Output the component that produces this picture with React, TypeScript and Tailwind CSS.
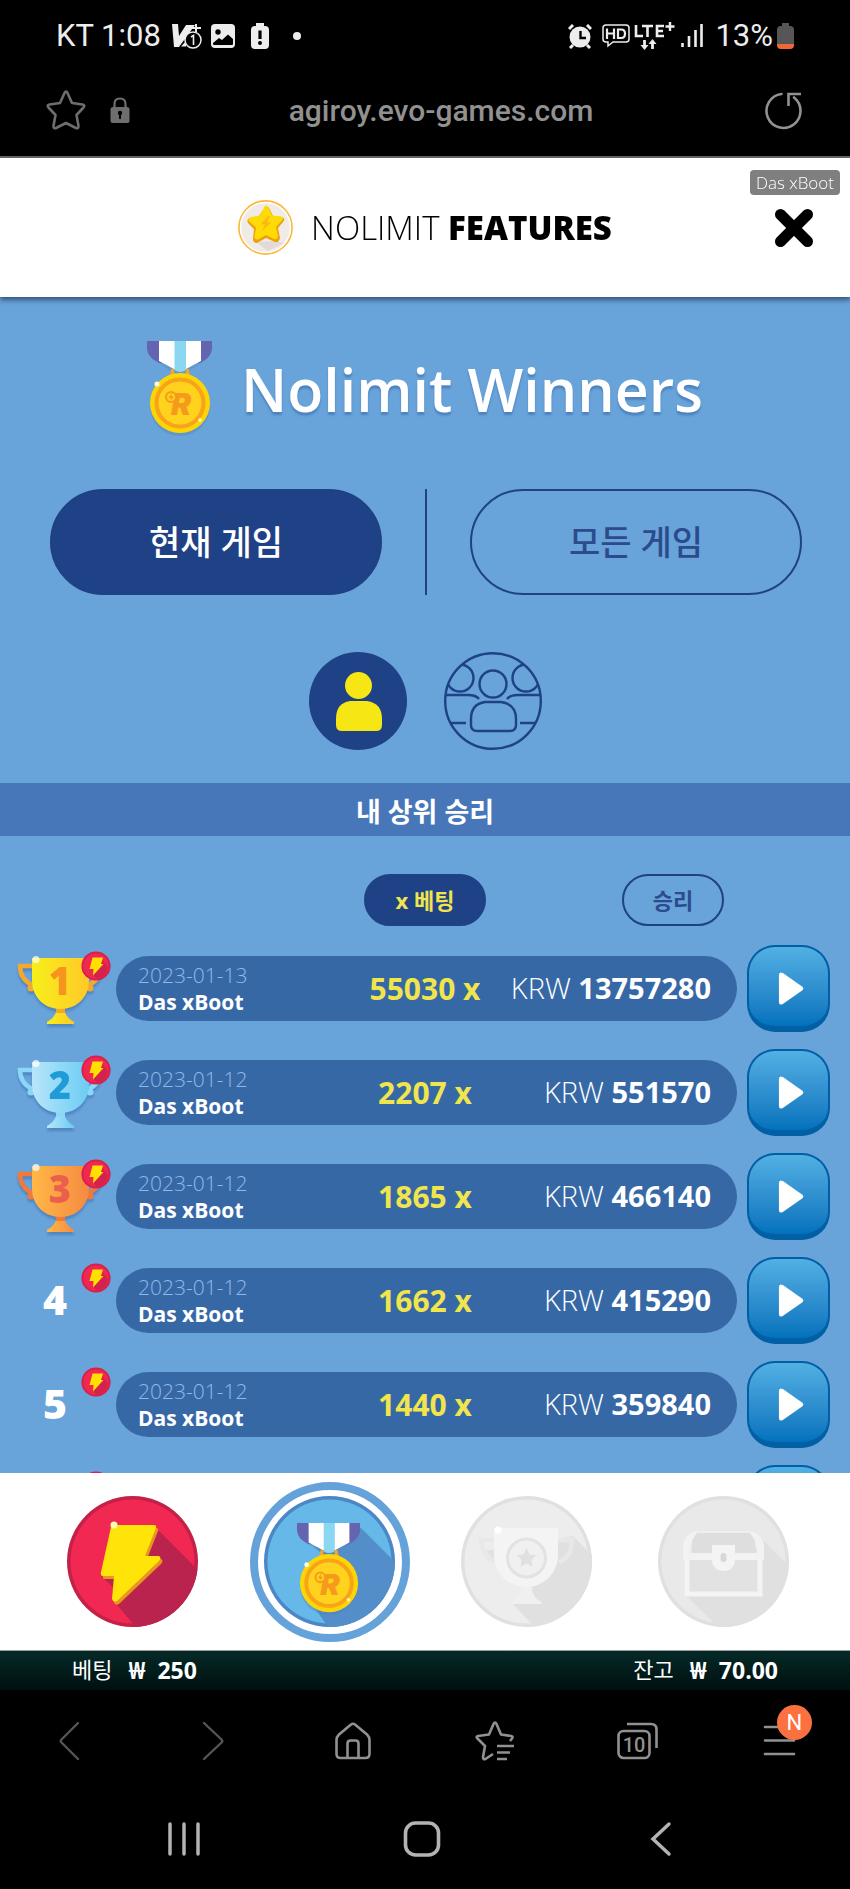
import { useState, type ReactNode } from 'react'
import clsx from 'clsx'

interface Win {
  rank: number
  date: string
  game: string
  multiplier: string
  amount: string
}

const wins: Win[] = [
  { rank: 1, date: '2023-01-13', game: 'Das xBoot', multiplier: '55030', amount: '13757280' },
  { rank: 2, date: '2023-01-12', game: 'Das xBoot', multiplier: '2207', amount: '551570' },
  { rank: 3, date: '2023-01-12', game: 'Das xBoot', multiplier: '1865', amount: '466140' },
  { rank: 4, date: '2023-01-12', game: 'Das xBoot', multiplier: '1662', amount: '415290' },
  { rank: 5, date: '2023-01-12', game: 'Das xBoot', multiplier: '1440', amount: '359840' },
]

const BOLT = 'M47 29 H87 Q90 29 89 32 L78 60 H92 Q95 62 92 65 L50 105 Q46 107 45 103 L47 80 H36 Q33 80 34 76 L44 31 Q45 29 47 29 Z'

function StatusBar() {
  return (
    <div className="flex h-[72px] shrink-0 items-center px-14 font-[Roboto,sans-serif] text-[31px] text-[#ededed]">
      <span>KT 1:08</span>
      <svg className="ml-2.5" width="32" height="28" viewBox="0 0 32 28" fill="none">
        <path d="M1 2 H7 L8 14 L15 3 H24 L8 25 H3 Z" fill="#ededed" />
        <path d="M10 24.500 L15 19 V24.500 Z" fill="#ededed" />
        <path d="M25 2 V10 M21 6 H30" stroke="#ededed" strokeWidth="2" />
        <circle cx="22" cy="18" r="8" fill="#000" stroke="#ededed" strokeWidth="1.5" />
        <path d="M20 15 L22.500 13.500 V23" stroke="#ededed" strokeWidth="1.6" />
      </svg>
      <svg className="ml-2" width="24" height="24" viewBox="0 0 24 24">
        <rect width="24" height="24" rx="4" fill="#ededed" />
        <circle cx="7" cy="8" r="2.700" fill="#000" />
        <path d="M2 19 L8 14 L11 16 L17 10.500 L22 15 V20 Q22 21 21 21 H3 Q2 21 2 20 Z" fill="#000" />
      </svg>
      <svg className="ml-4" width="18" height="26" viewBox="0 0 18 26">
        <path d="M5 0 H13 V3 H14 Q18 3 18 7 V22 Q18 26 14 26 H4 Q0 26 0 22 V7 Q0 3 4 3 H5 Z" fill="#ededed" />
        <path d="M9 7.500 V16" stroke="#000" strokeWidth="3.200" />
        <circle cx="9" cy="20" r="2" fill="#000" />
      </svg>
      <span className="ml-6 size-2 rounded-full bg-[#ededed]" />

      <div className="ml-auto flex items-center">
        <svg width="24" height="25" viewBox="0 0 24 25">
          <circle cx="12" cy="13" r="10.500" fill="#ededed" />
          <path d="M1 5 L5 1 M19 1 L23 5 M5 21 L2 24 M19 21 L22 24" stroke="#ededed" strokeWidth="3" />
          <path d="M12.500 7 V14 H18" fill="none" stroke="#000" strokeWidth="2.400" />
        </svg>
        <svg className="ml-2.5" width="28" height="24" viewBox="0 0 28 24" fill="none">
          <path d="M4 1 H24 Q27 1 27 4 V15 Q27 18 24 18 H11 L6 22 V18 H4 Q1 18 1 15 V4 Q1 1 4 1 Z" stroke="#ededed" strokeWidth="1.500" />
          <path d="M5 4.500 V15 M12 4.500 V15 M5 9.500 H12 M16 5.500 V14 H19 Q23 14 23 9.700 Q23 5.500 19 5.500 Z" stroke="#ededed" strokeWidth="2.200" />
        </svg>
        <svg className="ml-1" width="41" height="30" viewBox="0 0 41 30" fill="none" stroke="#ededed">
          <path d="M2 4 V15 H9 M8 5 H19 M13.500 5 V16 M30 5 H23 V15 H30 M23 10 H29" strokeWidth="2.600" />
          <path d="M36 1 V10 M31.500 5.500 H40.500" strokeWidth="2.400" />
          <path d="M10.500 19 V26 M18.500 28 V21" strokeWidth="2.800" />
          <path d="M6.500 24 H14.500 L10.500 29 Z M14.500 23 H22.500 L18.500 18 Z" fill="#ededed" stroke="none" />
        </svg>
        <svg className="ml-1.5" width="22" height="24" viewBox="0 0 22 24" stroke="#ededed" strokeWidth="2.600">
          <path d="M1.500 19 V23 M8 12 V23 M14.500 6 V23 M20.500 0 V23" />
        </svg>
        <span className="ml-3">13%</span>
        <svg className="ml-1" width="17" height="26" viewBox="0 0 17 26">
          <path d="M5 0 H12 V3 H13 Q17 3 17 7 V21 H0 V7 Q0 3 4 3 H5 Z" fill="#565656" />
          <path d="M0 21 H17 V22 Q17 26 13 26 H4 Q0 26 0 22 Z" fill="#f0673a" />
        </svg>
      </div>
    </div>
  )
}

function AddressBar() {
  return (
    <div className="grid h-[86px] shrink-0 grid-cols-[1fr_auto_1fr] items-center border-b-2 border-[#666] px-[46px] pb-2 font-[Roboto,sans-serif]">
      <div className="flex items-center gap-6">
        <button aria-label="Bookmark">
          <svg width="40" height="40" viewBox="0 0 40 40" fill="none" stroke="#6e6e6e" strokeWidth="2.600" strokeLinejoin="round">
            <path d="M18.500 3 Q20 0 21.500 3 L26 13 L36.500 14.500 Q39.500 15 37.500 17.500 L30.500 25 L32.500 36 Q32.500 39 30 38 L20 33 L10 38 Q7.500 39 7.500 36 L9.500 25 L2.500 17.500 Q0.500 15 3.500 14.500 L14 13 Z" />
          </svg>
        </button>
        <svg width="20" height="26" viewBox="0 0 20 26">
          <path d="M4.500 11 V7 Q4.500 1.500 10 1.500 Q15.500 1.500 15.500 7 V11" fill="none" stroke="#6e6e6e" strokeWidth="2.200" />
          <rect x="0.500" y="10" width="19" height="16" rx="2.500" fill="#6e6e6e" />
          <circle cx="10" cy="16" r="2.200" fill="#000" />
          <path d="M10 16 V22" stroke="#000" strokeWidth="2" />
        </svg>
      </div>
      <span className="pl-8 text-[30px] font-medium text-[#919191]">agiroy.evo-games.com</span>
      <button aria-label="Reload" className="justify-self-end">
        <svg width="40" height="40" viewBox="0 0 40 40" fill="none" stroke="#919191" strokeWidth="2.600">
          <path d="M17.500 4 A17 17 0 1 0 30 7.500" strokeLinecap="round" />
          <path d="M37 4 H24.500 V16" />
        </svg>
      </button>
    </div>
  )
}

function StarLogo() {
  return (
    <svg width="55" height="57" viewBox="0 0 55 57">
      <circle cx="27.500" cy="28.500" r="26.500" fill="#f1ebe8" stroke="#fbb936" strokeWidth="1.800" />
      <circle cx="27.500" cy="28.500" r="25" fill="none" stroke="#fff" strokeWidth="1.500" />
      <path d="M37 42 L46 44 L30 52 L18 43 Z" fill="#e2dad7" />
      <path d="M27 8 Q29 6 31 9 L35 17 L44 18 Q48 20 45 23 L40 29 L42 39 Q41 44 37 43 L28 39 L19 44 Q15 44 15 40 L16 30 L10 24 Q8 20 12 19 L21 17 Z" fill="#eba010" />
      <path d="M27 7 Q28.500 5.500 30 8 L34 16.500 L43 17.500 Q46.500 18.500 44 21.500 L38 28 L40 37 Q39.500 41 36 40 L28 36 L20 40.500 Q16 41 16.500 37.500 L18 28.500 L11 22.500 Q9.500 18.500 13 18 L22 16.500 Z" fill="#ffdb05" />
      <path d="M30 17 L23 25 L27 26 L23 33 L33 24 L29 23 L32 17 Z" fill="#fcb913" />
    </svg>
  )
}

function MedalArt() {
  return (
    <>
      <path d="M0 3 Q2 18 10 21 L27 32 H38 L56 21 Q64 17 65 3 Z" fill="#4f83bd" opacity="0.350" />
      <path d="M0 0 H65 V8 Q64 16 56 20 L53 22 H12 L9 20 Q1 16 0 8 Z" fill="#6564b0" />
      <path d="M12 0 H54 V20 L39 28 H27 L12 20 Z" fill="#fff" />
      <path d="M27.500 0 H39 V29 Q33 33 27.500 29 Z" fill="#8bd6f1" />
      <path d="M26 28 L24.500 36 M40 28 L41.500 36" stroke="#f5a52c" strokeWidth="3.500" />
      <circle cx="33" cy="65" r="30" fill="#4f83bd" opacity="0.400" />
      <circle cx="33" cy="62" r="30" fill="#fed504" />
      <circle cx="33" cy="62" r="23.500" fill="#ffd21d" stroke="#f8a31a" strokeWidth="4" />
      <text x="24" y="74" fill="#f59a1c" className="font-[Inter,sans-serif] text-[30px] font-black italic">R</text>
      <circle cx="24" cy="56" r="5" fill="#ffd21d" stroke="#f59a1c" strokeWidth="2" />
      <path d="M25 52 L21.500 57 H24 L23 60 L27 55.500 H24.500 Z" fill="#f59a1c" />
      <circle cx="10" cy="43" r="2.500" fill="#fffbe0" />
      <circle cx="53" cy="79" r="1.800" fill="#fff6c0" />
    </>
  )
}

function BoltBadge() {
  return (
    <svg className="absolute top-[6px] left-[81px]" width="30" height="30" viewBox="0 0 30 30">
      <circle cx="15" cy="15" r="14.600" fill="#d71f49" />
      <circle cx="15" cy="15" r="12.800" fill="#f02750" />
      <path d="M21 9 L27 16 A12.500 12.500 0 0 1 16 27.500 L12 24 Z" fill="#d3224b" />
      <path d="M11.500 6.500 H22 L20 13 H22.500 L12 24.500 L12.500 18 H8.500 Z" fill="#ffe000" />
    </svg>
  )
}

const cups = [
  { from: '#f7ef1a', to: '#ffc928', handle: '#f5a92c', digit: '#f7941d' },
  { from: '#b8e6fa', to: '#6cccf3', handle: '#8cd7f6', digit: '#1f9cd8' },
  { from: '#ffb846', to: '#f58a42', handle: '#f2793c', digit: '#ec5f4b' },
]

function Cup({ rank }: { rank: number }) {
  const c = cups[rank - 1]
  return (
    <svg width="116" height="87" viewBox="0 0 116 87" className="drop-shadow-[0_3px_1px_rgba(40,80,150,0.35)]">
      <defs>
        <linearGradient id={`cup-${rank}`}>
          <stop offset="0" stopColor={c.from} />
          <stop offset="1" stopColor={c.to} />
        </linearGradient>
      </defs>
      <path d="M33 21 H20 Q20 34 32 40 M88 21 H101 Q101 34 89 40" fill="none" stroke={c.handle} strokeWidth="4.500" />
      <circle cx="31" cy="43" r="3.500" fill={c.handle} />
      <circle cx="90" cy="43" r="3.500" fill={c.handle} />
      <path d="M56 60 H65 V67 Q67 73 74 77 V79 H47 V77 Q54 73 56 67 Z" fill={`url(#cup-${rank})`} />
      <path d="M56 62 H65 V68 H56 Z" fill={c.handle} />
      <path d="M32 13 H89 V35 C89 53 76 64 60.500 64 C45 64 32 53 32 35 Z" fill={`url(#cup-${rank})`} />
      <circle cx="36" cy="14.500" r="3.500" fill="#fff" opacity="0.750" />
      <text x="60" y="50" textAnchor="middle" fill={c.digit} className="text-[38px] font-extrabold">{rank}</text>
    </svg>
  )
}

function PlayButton({ label }: { label: string }) {
  return (
    <button
      aria-label={label}
      className="flex h-[87px] w-[83px] items-center justify-center rounded-[28px] border-2 border-b-[6px] border-[#005fa5] bg-gradient-to-b from-[#52b0e4] to-[#0072bc]"
    >
      <svg className="mt-1 ml-1" width="26" height="33" viewBox="0 0 27 34">
        <path d="M1 3 Q1 -1 5 1 L25 15 Q27.500 17 25 19 L5 33 Q1 35 1 31 Z" fill="#fff" />
      </svg>
    </button>
  )
}

function WinRow({ win }: { win: Win }) {
  return (
    <tr className="flex h-[104px] items-center">
      <td className="relative flex h-[87px] w-[116px] shrink-0 items-center">
        {win.rank <= 3 ? (
          <Cup rank={win.rank} />
        ) : (
          <span className="w-[110px] text-center text-[41px] font-extrabold">{win.rank}</span>
        )}
        <BoltBadge />
      </td>
      <td className="flex h-[65px] flex-1 flex-col justify-center rounded-l-full bg-[#3768a6] pt-0.5 pl-[22px] text-[21px] leading-[27px]">
        <span className="font-light text-[#8fb9e6]">{win.date}</span>
        <span className="font-bold">{win.game}</span>
      </td>
      <td className="flex h-[65px] w-[150px] items-center justify-center bg-[#3768a6] text-[30px] font-bold text-[#f0e54d]">
        {win.multiplier} x
      </td>
      <td className="flex h-[65px] w-[237px] items-center justify-end rounded-r-full bg-[#3768a6] pr-[26px] text-[29px]">
        <span className="font-light whitespace-pre">KRW </span>
        <span className="font-bold">{win.amount}</span>
      </td>
      <td className="w-[113px] shrink-0 pl-[10px]">
        <PlayButton label={`Replay ${win.rank}`} />
      </td>
    </tr>
  )
}

// Next row, still loading: only its badge and button are there
function PendingRow() {
  return (
    <tr className="flex h-[104px] items-center">
      <td className="relative h-[87px] w-[116px] shrink-0">
        <BoltBadge />
      </td>
      <td className="h-[65px] flex-1 rounded-full bg-[#3768a6]" />
      <td className="w-[113px] shrink-0 pl-[10px]">
        <PlayButton label="Replay" />
      </td>
    </tr>
  )
}

function NavDisc({ id, base, rim, shade, shadow, children }: { id: string; base: string; rim: string; shade: string; shadow: string; children: ReactNode }) {
  return (
    <svg width="131" height="131" viewBox="0 0 131 131">
      <clipPath id={id}>
        <circle cx="65.500" cy="65.500" r="65.500" />
      </clipPath>
      <circle cx="65.500" cy="65.500" r="65.500" fill={rim} />
      <circle cx="65.500" cy="65.500" r="62" fill={base} />
      <path d={shadow} fill={shade} clipPath={`url(#${id})`} />
      {children}
    </svg>
  )
}

function FeatureNav() {
  return (
    <nav className="flex h-[177px] shrink-0 items-center justify-around bg-white pr-7 pl-[34px]">
      <button aria-label="Bolt" className="flex w-[160px] justify-center">
        <NavDisc id="disc-bolt" base="#f02852" rim="#c32148" shade="#ba234d" shadow="M90 33 L140 83 V140 H76 L47 105 Z">
          <path d="M34 80 L47 92 L50 80 Z" fill="#ba234d" />
          <path d={BOLT} fill="#e8971e" transform="translate(2 3)" />
          <path d={BOLT} fill="#ffe40a" />
          <circle cx="47" cy="29" r="3.500" fill="#fffbb0" />
        </NavDisc>
      </button>
      <button aria-label="Winners" aria-current="page" className="flex size-[160px] items-center justify-center rounded-full border-8 border-[#66a2da]">
        <NavDisc id="disc-medal" base="#66b8e9" rim="#4c87c5" shade="#538ecb" shadow="M97 32 L140 75 V140 H73 L62 128 L48 108 L60 60 L48 48 Z">
          <g transform="translate(33 27) scale(0.970)">
            <MedalArt />
          </g>
        </NavDisc>
      </button>
      <button aria-label="Trophies" className="flex w-[160px] justify-center">
        <NavDisc id="disc-cup" base="#ededed" rim="#e0e0e0" shade="#e0e0e0" shadow="M112 40 L140 68 V140 H82 L52 108 L70 100 L25 55 Z">
          <path d="M34 44 H20 Q22 62 35 66 M97 44 H111 Q110 62 98 66" fill="none" stroke="#e8e8e8" strokeWidth="4.500" />
          <path d="M33 32 H97 V58 C97 78 82 91 65 91 C48 91 33 78 33 58 Z" fill="#f4f4f4" />
          <path d="M60 91 H71 Q71 102 81 106 V108 H50 V106 Q60 102 60 91 Z" fill="#f0f0f0" />
          <circle cx="65.500" cy="62" r="19" fill="#f0f0f0" stroke="#e2e2e2" strokeWidth="3" />
          <path d="M65.500 52 L68.500 58.500 L75.500 59.300 L70.300 64 L71.700 71 L65.500 67.500 L59.300 71 L60.700 64 L55.500 59.300 L62.500 58.500 Z" fill="#e0e0e0" />
          <circle cx="37" cy="34" r="3.500" fill="#fff" />
        </NavDisc>
      </button>
      <button aria-label="Chest" className="flex w-[160px] justify-center">
        <NavDisc id="disc-chest" base="#e9e9e9" rim="#e0e0e0" shade="#e0e0e0" shadow="M106 45 L140 79 V140 H70 L27 99 Z">
          <rect x="29" y="60" width="73" height="38" fill="#e2e2e2" stroke="#f4f4f4" strokeWidth="5" />
          <path d="M34 36 H97 V58 H34 Z" fill="#dedede" />
          <path d="M25 64 V50 Q27 35 42 35 Q33 40 32 57 H99 Q98 40 89 35 Q104 36 106 50 V64 Z" fill="#f2f2f2" />
          <path d="M38 36 H93" stroke="#efefef" strokeWidth="2" />
          <path d="M54 49 H77 V64 Q76 75 65.500 75 Q55 75 54 64 Z" fill="#f4f4f4" />
          <rect x="62.500" y="57" width="6" height="9" rx="3" fill="#d8d8d8" />
        </NavDisc>
      </button>
    </nav>
  )
}

function Balance({ label, value }: { label: string; value: string }) {
  return (
    <p className="flex gap-4">
      <span className="text-[22px]">{label}</span>
      <span className="flex gap-3 text-[23px] font-bold">
        <span className="font-['Noto_Sans','Open_Sans',sans-serif]">₩</span>
        <span>{value}</span>
      </span>
    </p>
  )
}

function BalanceBar() {
  return (
    <div className="flex h-10 shrink-0 items-center justify-between border-t border-[#999] bg-gradient-to-b from-[#062a28] to-[#001010] px-[72px]">
      <Balance label="베팅" value="250" />
      <Balance label="잔고" value="70.00" />
    </div>
  )
}

function BrowserToolbar() {
  return (
    <div className="flex h-[105px] shrink-0 items-center justify-between px-[50px] pb-1 font-[Roboto,sans-serif]">
      <button aria-label="Back">
        <svg width="40" height="40" viewBox="0 0 40 40" fill="none" stroke="#555" strokeWidth="2.400" strokeLinecap="round">
          <path d="M28 2 L11.500 18.500 Q10 20 11.500 21.500 L28 38" />
        </svg>
      </button>
      <button aria-label="Forward">
        <svg width="40" height="40" viewBox="0 0 40 40" fill="none" stroke="#555" strokeWidth="2.400" strokeLinecap="round">
          <path d="M12 2 L29.500 18.500 Q31 20 29.500 21.500 L12 38" />
        </svg>
      </button>
      <button aria-label="Home">
        <svg width="40" height="40" viewBox="0 0 40 40" fill="none" stroke="#919191" strokeWidth="2.600" strokeLinejoin="round">
          <path d="M18 3.500 Q20 2 22 3.500 L34 13.500 Q36.500 16 36.500 19 V33 Q36.500 37 32.500 37 H7.500 Q3.500 37 3.500 33 V19 Q3.500 16 6 13.500 Z" />
          <path d="M14.500 37 V22.500 Q14.500 19.500 17.500 19.500 H22.500 Q25.500 19.500 25.500 22.500 V37" />
        </svg>
      </button>
      <button aria-label="Bookmarks">
        <svg width="40" height="40" viewBox="0 0 40 40" fill="none" stroke="#919191" strokeWidth="2.600" strokeLinejoin="round">
          <path d="M35 20 L37 17.500 Q38.500 15.500 36 15 L26 13.500 L21.500 3 Q20 0 18.500 3 L14 13.500 L3 15 Q0.500 15.500 2.500 17.500 L10 25 L8 36 Q8 39 10.500 38 L18 33" />
          <path d="M22 25 H39 M22 31.500 H35 M22 38 H32" />
        </svg>
      </button>
      <button aria-label="Tabs, 10 open">
        <svg width="42" height="40" viewBox="0 0 42 40" fill="none" stroke="#919191" strokeWidth="2.600">
          <rect x="2.500" y="10" width="31" height="27" rx="5" />
          <path d="M11 3 H35 Q40.500 3 40.500 8.500 V27" />
          <text x="18" y="31" textAnchor="middle" fill="#919191" stroke="none" className="text-[20px] font-medium">10</text>
        </svg>
      </button>
      <button aria-label="Menu" className="relative">
        <svg width="40" height="40" viewBox="0 0 40 40" stroke="#919191" strokeWidth="2.600" strokeLinecap="round">
          <path d="M5 6 H34 M5 19.500 H34 M5 33 H34" />
        </svg>
        <span className="absolute -top-4 -right-3 flex size-[35px] items-center justify-center rounded-full bg-[#fd7140] text-[22px] text-white">N</span>
      </button>
    </div>
  )
}

function SystemNav() {
  return (
    <div className="flex h-[94px] shrink-0 items-center justify-between pr-[171px] pb-1.5 pl-[164px]">
      <button aria-label="Recent apps">
        <svg width="40" height="40" viewBox="0 0 40 40" stroke="#b3b3b3" strokeWidth="3.500" strokeLinecap="round">
          <path d="M6 5 V35 M20 5 V35 M34 5 V35" />
        </svg>
      </button>
      <button aria-label="Home screen">
        <svg width="40" height="40" viewBox="0 0 40 40" fill="none" stroke="#b3b3b3" strokeWidth="3.600">
          <rect x="3.500" y="4" width="33" height="32" rx="10" />
        </svg>
      </button>
      <button aria-label="Go back">
        <svg width="40" height="40" viewBox="0 0 40 40" fill="none" stroke="#b3b3b3" strokeWidth="3.500" strokeLinecap="round">
          <path d="M30 5 L14 20 L30 35" />
        </svg>
      </button>
    </div>
  )
}

export default function App() {
  const [scope, setScope] = useState<'current' | 'all'>('current')
  const [sort, setSort] = useState<'bet' | 'win'>('bet')

  return (
    <div className="flex h-screen flex-col overflow-hidden bg-black font-['Open_Sans','Noto_Sans_CJK_KR',sans-serif] text-white">
      <StatusBar />
      <AddressBar />

      <header className="relative z-10 grid h-[139px] shrink-0 grid-cols-[1fr_auto_1fr] items-center bg-white text-black shadow-[0_3px_5px_rgba(30,50,80,0.7)]">
        <div className="col-start-2 flex items-center gap-[18px]">
          <StarLogo />
          <h1 className="text-[33px] font-light">
            NOLIMIT <strong className="font-extrabold">FEATURES</strong>
          </h1>
        </div>
        <button aria-label="Close" className="mr-9 justify-self-end">
          <svg width="40" height="40" viewBox="0 0 40 40" stroke="#000" strokeWidth="11" strokeLinecap="round">
            <path d="M6.500 6.500 L33.500 33.500 M33.500 6.500 L6.500 33.500" />
          </svg>
        </button>
        <span className="absolute top-3 right-[10px] rounded-[4px] bg-[#7f7f7f] px-1.5 text-[17px] leading-[25px] font-light text-white">
          Das xBoot
        </span>
      </header>

      <main className="min-h-0 flex-1 overflow-y-auto bg-[#68a3da] [scrollbar-width:none]">
        <div className="flex items-center justify-center gap-7 pt-11">
          <svg width="66" height="96" viewBox="0 0 66 96">
            <MedalArt />
          </svg>
          <h2 className="text-[59px] leading-[96px] font-semibold [text-shadow:0_3px_2px_rgba(60,110,170,0.6)]">Nolimit Winners</h2>
        </div>

        <div className="mt-[52px] flex gap-[43px] pr-12 pl-[50px] text-[34px] font-medium">
          <button
            onClick={() => setScope('current')}
            className={clsx('h-[106px] flex-1 rounded-full border-2 border-[#1f4185]', scope === 'current' ? 'bg-[#1f4185] text-white' : 'text-[#2b4b8c]')}
          >
            현재 게임
          </button>
          <div className="w-0.5 bg-[#1f4185]" />
          <button
            onClick={() => setScope('all')}
            className={clsx('h-[106px] flex-1 rounded-full border-2 border-[#1f4185]', scope === 'all' ? 'bg-[#1f4185] text-white' : 'text-[#2b4b8c]')}
          >
            모든 게임
          </button>
        </div>

        <div className="mt-[57px] flex justify-center gap-[37px]">
          <button aria-label="My wins">
            <svg width="98" height="98" viewBox="0 0 98 98">
              <circle cx="49" cy="49" r="49" fill="#1f4185" />
              <circle cx="49.500" cy="33.500" r="13.500" fill="#f6e614" />
              <path d="M41 49 H58 Q73 51 73 67 V73 Q73 79 67 79 H33 Q27 79 27 73 V67 Q27 51 41 49 Z" fill="#f6e614" />
            </svg>
          </button>
          <button aria-label="All players">
            <svg width="98" height="98" viewBox="0 0 98 98" fill="none" stroke="#1f4185" strokeWidth="2.400">
              <clipPath id="crowd">
                <circle cx="49" cy="49" r="48" />
              </clipPath>
              <circle cx="49" cy="49" r="47.800" />
              <circle cx="49" cy="32" r="13.500" />
              <path d="M41 50 H57 Q72 52 72 67 V73 Q72 79 66 79 H33 Q27 79 27 73 V67 Q27 52 41 50 Z" />
              <g clipPath="url(#crowd)">
                <circle cx="16" cy="26" r="13.500" />
                <circle cx="82" cy="26" r="13.500" />
                <path d="M0 43 H24 Q32 43 35 47 M98 43 H74 Q66 43 63 47 M0 71 H22 M76 71 H98" />
              </g>
            </svg>
          </button>
        </div>

        <h3 className="mt-[33px] h-[53px] bg-[#4877b9] text-center text-[27px] leading-[57px] font-bold">내 상위 승리</h3>

        <table className="mt-[38px] block">
          <thead className="block">
            <tr className="flex pb-[10px] text-[22px]">
              <th className="w-[116px] shrink-0" aria-label="Rank" />
              <th className="flex-1" aria-label="Game" />
              <th className="flex w-[150px] justify-center">
                <button
                  onClick={() => setSort('bet')}
                  className={clsx('h-[52px] w-[122px] rounded-full border-2 border-[#1f4185] font-bold', sort === 'bet' ? 'bg-[#1f4185] text-[#f0e54d]' : 'text-[#2b4b8c]')}
                >
                  x 베팅
                </button>
              </th>
              <th className="flex w-[237px] justify-end pr-[13px]">
                <button
                  onClick={() => setSort('win')}
                  className={clsx('h-[52px] w-[102px] rounded-full border-2 border-[#1f4185] font-bold', sort === 'win' ? 'bg-[#1f4185] text-[#f0e54d]' : 'text-[#2b4b8c]')}
                >
                  승리
                </button>
              </th>
              <th className="w-[113px] shrink-0" aria-label="Replay" />
            </tr>
          </thead>
          <tbody className="block">
            {wins.map((win) => (
              <WinRow key={win.rank} win={win} />
            ))}
            <PendingRow />
          </tbody>
        </table>
      </main>

      <FeatureNav />
      <BalanceBar />
      <BrowserToolbar />
      <SystemNav />
    </div>
  )
}
